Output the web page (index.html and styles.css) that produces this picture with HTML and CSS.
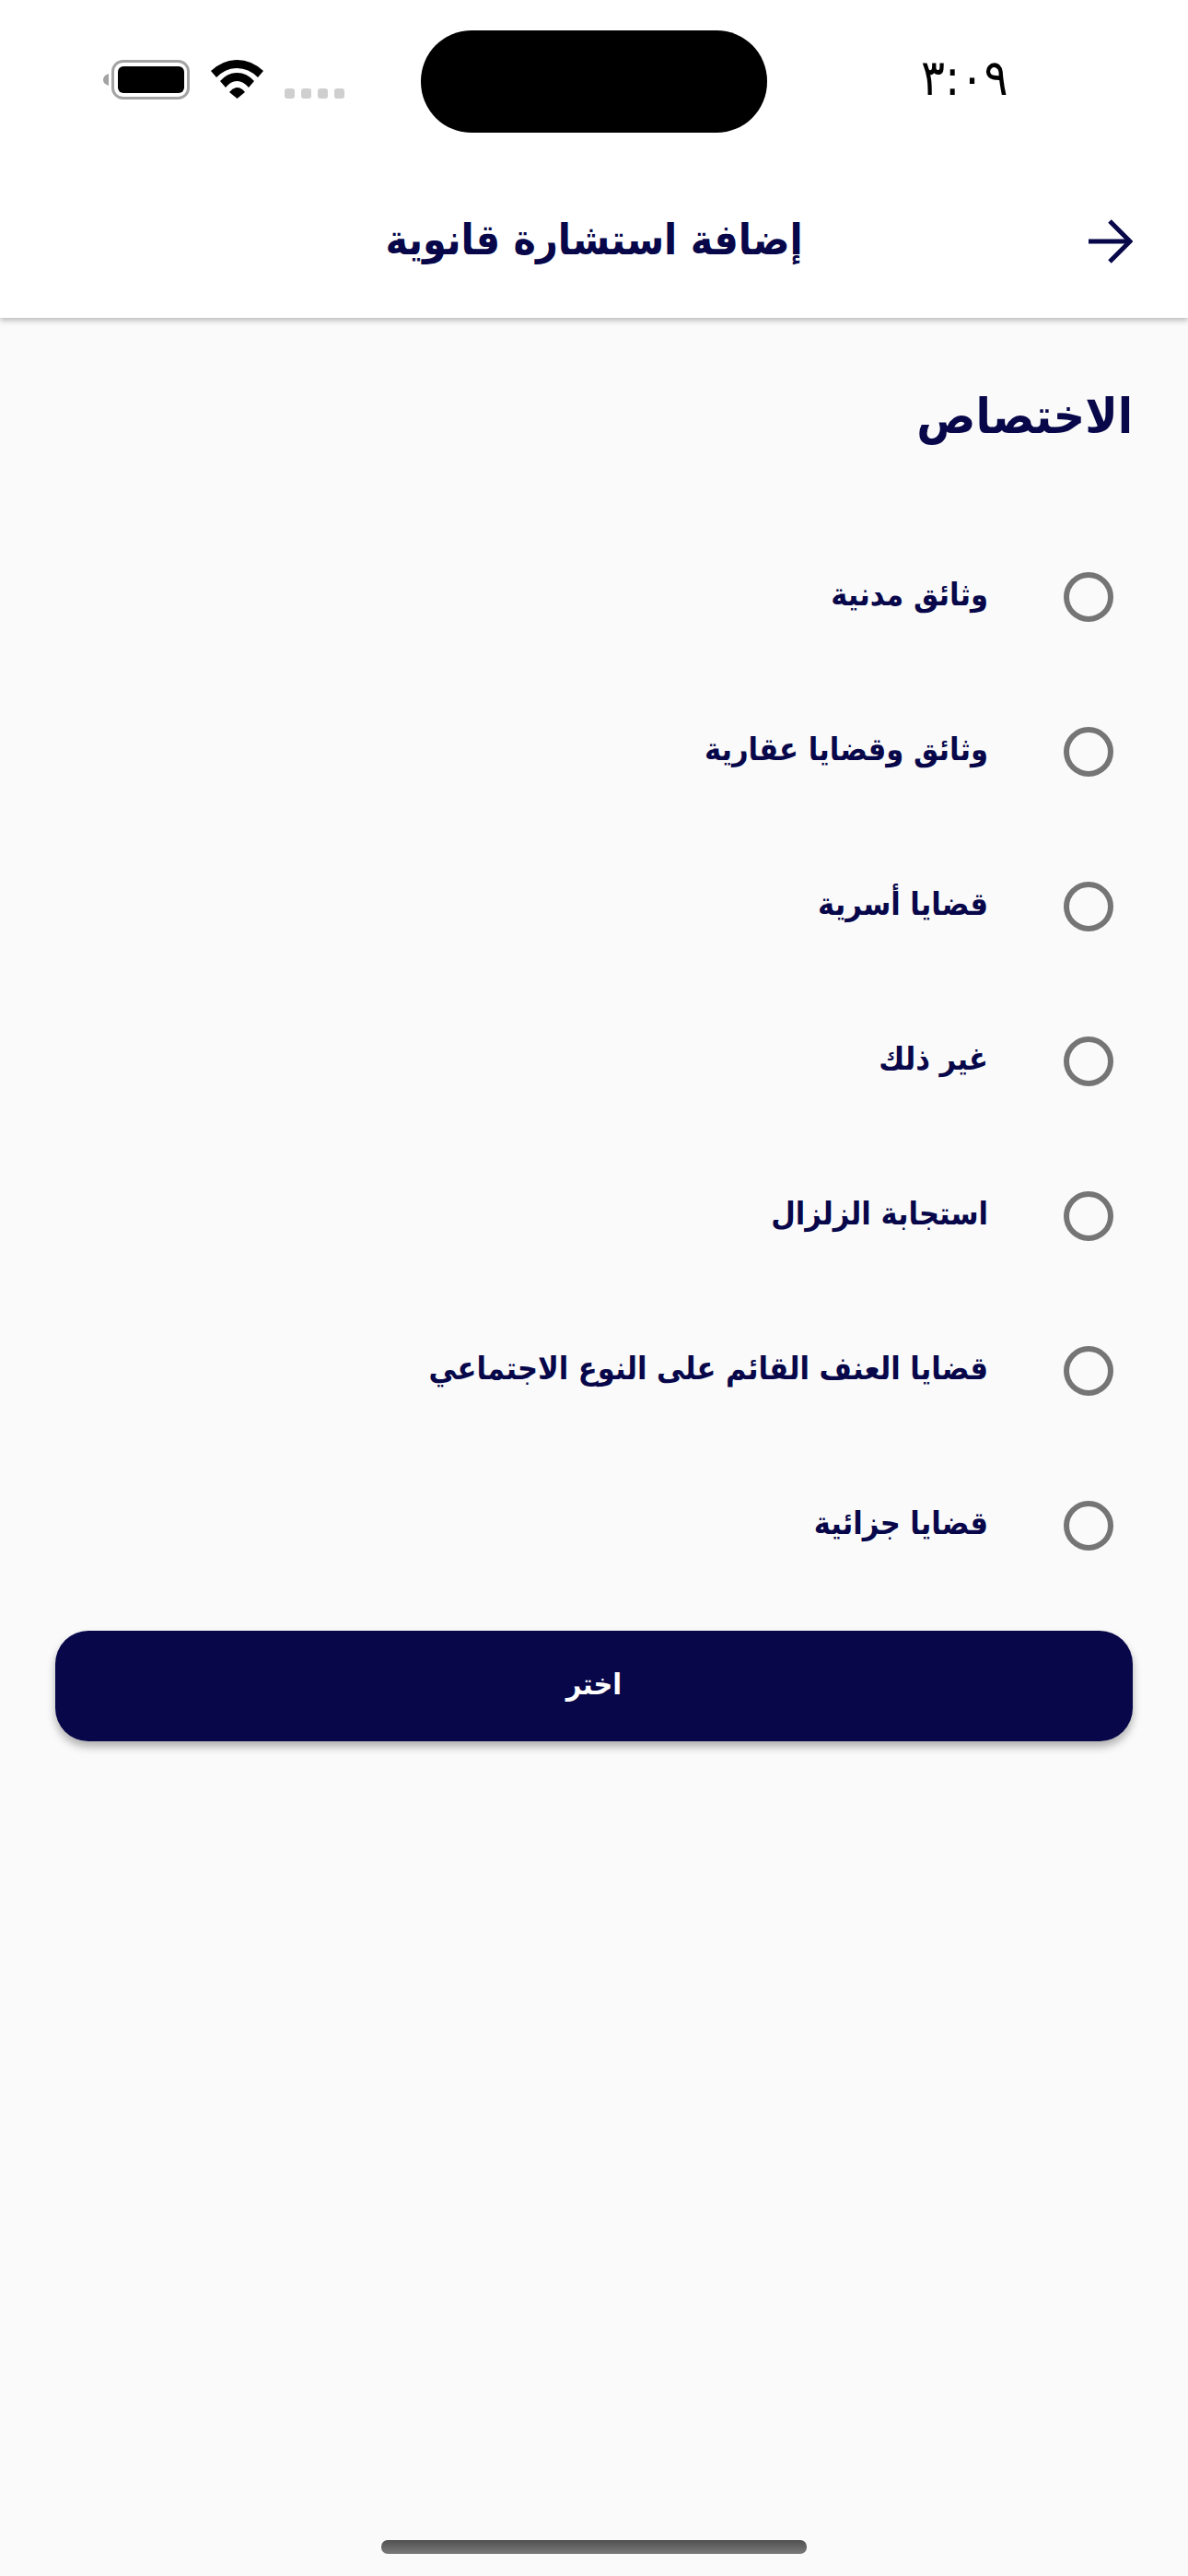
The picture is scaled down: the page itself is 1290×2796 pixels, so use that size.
FILE: index.html
```html
<!DOCTYPE html>
<html lang="ar" dir="rtl">
  <head>
    <meta charset="UTF-8" />
    <meta name="viewport" content="width=device-width, initial-scale=1.0" />
    <title>إضافة استشارة قانونية</title>
    <link rel="stylesheet" href="styles.css">
  </head>
  <body>
    <header class="topBar">
      <div class="statusBar">
        <div class="statusIcons">
          <svg class="battery" width="94" height="43" viewBox="0 0 94 43">
            <path d="M6 15 Q0 17 0 21.5 Q0 26 6 28Z" fill="#a3a3a3" />
            <rect x="10.5" y="1.5" width="82" height="40" rx="11" fill="none" stroke="#a3a3a3" stroke-width="3" />
            <rect x="16" y="7" width="72" height="29" rx="6" fill="#000" />
          </svg>
          <svg class="wifi" width="57" height="42" viewBox="0 0 57 42">
            <path d="M0 12Q13 0 28.5 0Q44 0 57 12L51 19Q41 9 28.5 9Q16 9 6 19Z" />
            <path d="M10 23Q18 14 28.5 14Q39 14 47 23L41 30Q35 23 28.5 23Q22 23 16 30Z" />
            <path d="M20 35Q24 30 28.5 30Q33 30 37 35L28.5 42Z" />
          </svg>
          <div class="signal">
            <span></span>
            <span></span>
            <span></span>
            <span></span>
          </div>
        </div>
        <div class="island"></div>
        <div class="clock">٣:٠٩</div>
      </div>
      <div class="titleBar">
        <a class="back" href="#">
          <svg width="48" height="48" viewBox="0 0 48 48" fill="none" stroke="#07074a" stroke-width="5">
            <path d="M0 24H44" />
            <path d="M23 2L45 24L23 46" />
          </svg>
        </a>
        <h1 class="pageTitle">إضافة استشارة قانوية</h1>
      </div>
    </header>
    <main class="content">
      <h2 class="sectionTitle">الاختصاص</h2>
      <label class="option"><input type="radio" name="field" /><span>وثائق مدنية</span></label>
      <label class="option"><input type="radio" name="field" /><span>وثائق وقضايا عقارية</span></label>
      <label class="option"><input type="radio" name="field" /><span>قضايا أسرية</span></label>
      <label class="option"><input type="radio" name="field" /><span>غير ذلك</span></label>
      <label class="option"><input type="radio" name="field" /><span>استجابة الزلزال</span></label>
      <label class="option"><input type="radio" name="field" /><span>قضايا العنف القائم على النوع الاجتماعي</span></label>
      <label class="option"><input type="radio" name="field" /><span>قضايا جزائية</span></label>
      <button type="button" class="choose">اختر</button>
    </main>
    <div class="homeBar"></div>
  </body>
</html>
```

FILE: styles.css
```css
body {
  margin: 0;
  height: 2796px;
  display: flex;
  flex-direction: column;
  background-color: #fafafa;
  color: #07074a;
  font-family: "DejaVu Sans", sans-serif;
  font-stretch: condensed;
}
.topBar {
  background-color: #fff;
  height: 345px;
  box-shadow: 0 3px 6px rgba(0, 0, 0, 0.25);
}
.statusBar {
  direction: ltr;
  display: flex;
  align-items: flex-start;
  height: 178px;
  padding: 33px 0 0 112px;
  box-sizing: border-box;
}
.statusIcons {
  display: flex;
  align-items: flex-end;
  width: 262px;
  margin-top: 32px;
}
.wifi {
  margin-left: 23px;
  margin-bottom: 1px;
}
.signal {
  display: flex;
  gap: 7px;
  margin-left: 23px;
  margin-bottom: 1px;
}
.signal span {
  width: 11px;
  height: 11px;
  border-radius: 3px;
  background-color: #cfcfcf;
}
.island {
  width: 376px;
  height: 111px;
  margin-left: 83px;
  border-radius: 55px;
  background-color: #000;
}
.clock {
  margin-left: 167px;
  margin-top: 17px;
  color: #000;
  font-size: 54px;
  line-height: 70px;
}
.titleBar {
  display: grid;
  grid-template-columns: 1fr auto 1fr;
  align-items: center;
  height: 167px;
}
.back {
  grid-column: 1;
  grid-row: 1;
  display: flex;
  justify-self: start;
  margin-right: 60px;
}
.pageTitle {
  grid-column: 2;
  grid-row: 1;
  margin: -4px 0 0;
  font-size: 46px;
  font-weight: bold;
}
.content {
  padding: 67px 60px 0;
  display: flex;
  flex-direction: column;
}
.sectionTitle {
  margin: 0 0 72px;
  height: 80px;
  font-size: 53px;
  line-height: 80px;
  font-weight: bold;
}
.option {
  display: flex;
  align-items: center;
  gap: 82px;
  height: 168px;
  padding-right: 21px;
  font-size: 34px;
  font-weight: bold;
}
.option span {
  margin-top: -7px;
}
.option input {
  appearance: none;
  margin: 0;
  width: 54px;
  height: 54px;
  border: 6px solid #757575;
  border-radius: 50%;
  box-sizing: border-box;
}
.choose {
  margin-top: 30px;
  height: 120px;
  padding-bottom: 6px;
  border: none;
  border-radius: 36px;
  background-color: #07074a;
  color: #fff;
  font-family: inherit;
  font-stretch: inherit;
  font-size: 32px;
  font-weight: bold;
  box-shadow: 0 6px 10px rgba(0, 0, 0, 0.3);
}
.homeBar {
  width: 462px;
  height: 15px;
  margin: auto auto 24px;
  border-radius: 7px;
  background: linear-gradient(#505050, #7a7a7a);
}
```
